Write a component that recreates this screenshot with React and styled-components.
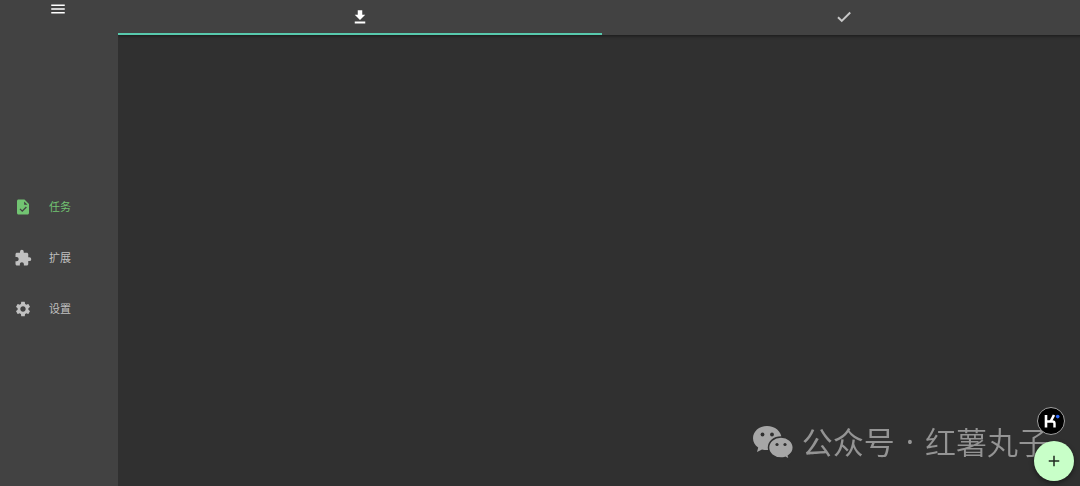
import React, { useState } from 'react';
import styled, { createGlobalStyle } from 'styled-components';
import { MdAdd, MdExtension, MdMenu, MdSettings } from 'react-icons/md';

const GlobalStyle = createGlobalStyle`
  * {
    box-sizing: border-box;
  }
  body {
    margin: 0;
    background: #303030;
    font-family: 'Noto Sans', 'Noto Sans CJK SC', sans-serif;
  }
`;

const PageSty = styled.div`
  display: flex;
  min-height: 100vh;
  overflow: hidden;
`;

const SidebarSty = styled.aside`
  display: flex;
  flex-direction: column;
  flex: 0 0 118px;
  background: #424242;
`;

const MenuButton = styled.button`
  display: flex;
  justify-content: center;
  height: 30px;
  padding: 0 2px 0 0;
  border: 0;
  background: none;
  color: #fff;
  cursor: pointer;
`;

const NavSty = styled.nav`
  display: flex;
  flex: 1;
  flex-direction: column;
  justify-content: center;
`;

const NavLink = styled.a`
  display: flex;
  align-items: center;
  gap: 17px;
  height: 51px;
  padding: 0 14px;
  color: ${({ $active }) => ($active ? '#72c472' : '#c0c0c0')};
  font-size: 11px;
  line-height: 16px;
  text-decoration: none;
`;

const MainSty = styled.main`
  flex: 1;
  min-width: 0;
  overflow: hidden;
`;

const TabsSty = styled.div`
  display: flex;
  margin-right: -6px;
  background: #424242;
  box-shadow: 0 1px 3px rgba(0, 0, 0, 0.5);
`;

const TabButton = styled.button`
  display: flex;
  flex: 1;
  align-items: center;
  justify-content: center;
  height: 35px;
  padding: 0;
  border: 0;
  border-bottom: 2px solid ${({ $active }) => ($active ? '#58c9ad' : 'transparent')};
  background: none;
  color: ${({ $active }) => ($active ? '#fff' : '#c8c8c8')};
  cursor: pointer;
`;

const WatermarkSty = styled.div`
  position: fixed;
  right: 31px;
  bottom: 25px;
  display: flex;
  align-items: flex-start;
  gap: 8px;
  color: #949494;
  font-family: 'Noto Sans', 'Noto Sans CJK SC', sans-serif;
  font-size: 31px;
  line-height: 32px;
  white-space: nowrap;
`;

const AccountSty = styled.span`
  display: flex;
  gap: 11px;
`;

const AccountName = styled.span`
  font-family: 'Noto Sans CJK SC', sans-serif;
  font-weight: ${({ $light }) => ($light ? 350 : 400)};
`;

const FloatingSty = styled.div`
  position: fixed;
  right: 6px;
  bottom: 5px;
  display: flex;
  flex-direction: column;
  align-items: center;
  gap: 6px;
`;

const KButton = styled.button`
  display: flex;
  align-items: center;
  justify-content: center;
  width: 28px;
  height: 28px;
  margin-right: 6px;
  padding: 0;
  border: 1px solid #a0a0a0;
  border-radius: 50%;
  background: #000;
  cursor: pointer;
`;

const AddButton = styled.button`
  display: flex;
  align-items: center;
  justify-content: center;
  width: 40px;
  height: 40px;
  padding: 0;
  border: 0;
  border-radius: 50%;
  background: #c8ffc8;
  color: #202a20;
  box-shadow: 0 2px 5px rgba(0, 0, 0, 0.45);
  cursor: pointer;
`;

function TaskIcon() {
  return (
    <svg width="18" height="18" viewBox="0 0 24 24" fill="currentColor">
      <path d="M14 2H6c-1.100 0-2 .9-2 2v16c0 1.100.9 2 2 2h12c1.100 0 2-.9 2-2V8l-6-6zM13.500 9V4.500L18 9h-4.500z" />
      <path d="M8 14.500l3 3 5.500-5.500" fill="none" stroke="#424242" strokeWidth="1.800" />
    </svg>
  );
}

function DownloadIcon() {
  return (
    <svg width="18" height="18" viewBox="0 0 24 24" fill="currentColor">
      <path d="M19 9h-4V3H9v6H5l7 7 7-7zM5 18v2.500h14V18H5z" />
    </svg>
  );
}

function CheckIcon() {
  return (
    <svg width="18" height="18" viewBox="0 0 24 24">
      <path d="M4 12.300l5 5L20.300 6" fill="none" stroke="currentColor" strokeWidth="2.600" />
    </svg>
  );
}

function KLogo() {
  return (
    <svg width="26" height="26" viewBox="0 0 26 26" fill="none" stroke="#fff">
      <path d="M8 7v12.500" strokeWidth="2.600" />
      <path d="M9 13.500h5.500q2 0 2 2v4" strokeWidth="2.400" />
      <path d="M12.600 13.500L16 7" strokeWidth="2.600" />
      <circle cx="19.700" cy="8.600" r="1.800" fill="#2f6bff" stroke="none" />
    </svg>
  );
}

function WeChatIcon() {
  return (
    <svg width="42" height="36" viewBox="0 0 42 36">
      <path
        d="M15 1C7 1 1 6.500 1 13.200c0 3.900 2 7.200 5.200 9.400L5 27l5-2.600c1.600.5 3.300.7 5 .7 8 0 14.500-5.300 14.500-11.900S23 1 15 1z"
        fill="#a6a6a6"
      />
      <path
        d="M29 12c-7 0-12.500 4.700-12.500 10.600S22 33 29 33c1.500 0 2.900-.2 4.200-.6L37.500 34.500l-1.100-3.600c3-1.900 4.900-4.900 4.900-8.300C41.300 16.700 36 12 29 12z"
        fill="#a6a6a6"
        stroke="#303030"
        strokeWidth="1.500"
      />
      <g fill="#303030">
        <circle cx="10.500" cy="9.500" r="1.900" />
        <circle cx="20" cy="9.500" r="1.900" />
        <circle cx="25" cy="19.500" r="1.600" />
        <circle cx="33" cy="19.500" r="1.600" />
      </g>
    </svg>
  );
}

const navItems = [
  { id: 'tasks', label: '任务', icon: <TaskIcon /> },
  { id: 'extensions', label: '扩展', icon: <MdExtension size={18} /> },
  { id: 'settings', label: '设置', icon: <MdSettings size={18} /> },
];

const tabs = [
  { id: 'downloading', label: '下载中', icon: <DownloadIcon /> },
  { id: 'done', label: '已完成', icon: <CheckIcon /> },
];

function Sidebar() {
  const [page, setPage] = useState('tasks');
  return (
    <SidebarSty>
      <MenuButton type="button" aria-label="菜单">
        <MdMenu size={18} />
      </MenuButton>
      <NavSty>
        {navItems.map((item) => (
          <NavLink
            key={item.id}
            href={`#${item.id}`}
            $active={item.id === page}
            onClick={() => setPage(item.id)}
          >
            {item.icon}
            {item.label}
          </NavLink>
        ))}
      </NavSty>
    </SidebarSty>
  );
}

function Tabs() {
  const [tab, setTab] = useState('downloading');
  return (
    <TabsSty role="tablist">
      {tabs.map((item) => (
        <TabButton
          key={item.id}
          type="button"
          role="tab"
          aria-label={item.label}
          aria-selected={item.id === tab}
          $active={item.id === tab}
          onClick={() => setTab(item.id)}
        >
          {item.icon}
        </TabButton>
      ))}
    </TabsSty>
  );
}

export default function App() {
  return (
    <>
      <GlobalStyle />
      <PageSty>
        <Sidebar />
        <MainSty>
          <Tabs />
        </MainSty>
      </PageSty>
      <WatermarkSty>
        <WeChatIcon />
        <AccountSty>
          <AccountName>公众号</AccountName>
          <span>·</span>
          <AccountName $light>红薯丸子</AccountName>
        </AccountSty>
      </WatermarkSty>
      <FloatingSty>
        <KButton type="button" aria-label="Kimi">
          <KLogo />
        </KButton>
        <AddButton type="button" aria-label="新建任务">
          <MdAdd size={18} />
        </AddButton>
      </FloatingSty>
    </>
  );
}
